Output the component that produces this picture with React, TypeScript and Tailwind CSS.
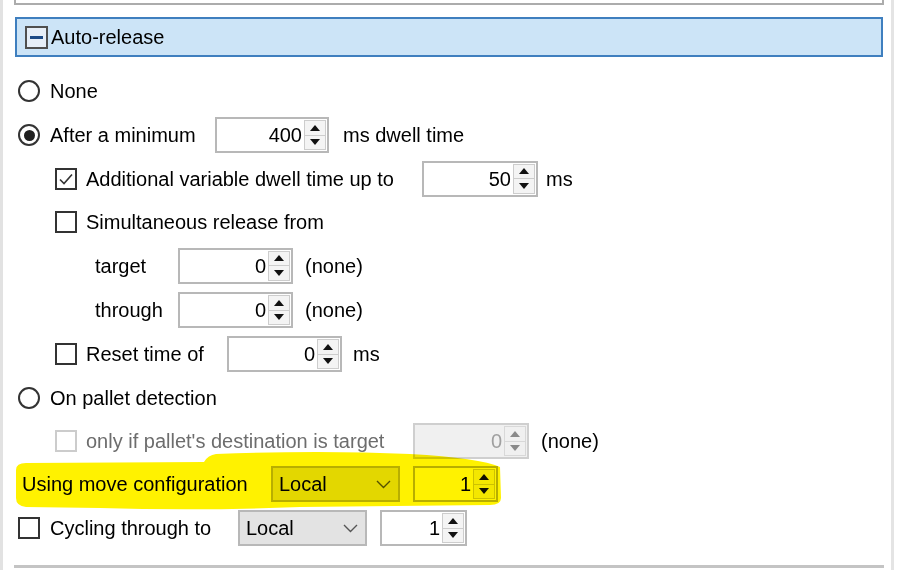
import type { ReactNode } from 'react';

function Radio({ checked = false }: { checked?: boolean }): JSX.Element {
  return (
    <span className="flex h-[22px] w-[22px] shrink-0 items-center justify-center rounded-full border-2 border-[#333333] bg-white">
      {checked && <span className="block h-[11px] w-[11px] rounded-full bg-[#1f1f1f]"></span>}
    </span>
  );
}

function Check({ checked = false, disabled = false }: { checked?: boolean; disabled?: boolean }): JSX.Element {
  return (
    <span
      className={`flex h-[22px] w-[22px] shrink-0 items-center justify-center border-2 bg-white ${
        disabled ? 'border-[#cccccc]' : 'border-[#333333]'
      }`}
    >
      {checked && (
        <svg width="16" height="14" viewBox="0 0 16 14">
          <path d="M2 7.5 L6 11.5 L14 2.5" fill="none" stroke="#333333" strokeWidth="1.6" />
        </svg>
      )}
    </span>
  );
}

function Spin({
  value,
  className,
  disabled = false,
}: {
  value: string;
  className: string;
  disabled?: boolean;
}): JSX.Element {
  const arrow = disabled ? '#8a8a8a' : '#111111';
  return (
    <div
      className={`flex h-[36px] shrink-0 border-2 ${
        disabled ? 'border-[#cfcfcf] bg-[#f0f0f0]' : 'border-[#b8b8b8] bg-white'
      } ${className}`}
    >
      <div
        className={`flex flex-1 items-center justify-end pr-[2px] ${
          disabled ? 'text-[#a0a0a0]' : 'text-black'
        }`}
      >
        {value}
      </div>
      <div className="flex w-[23px] flex-col py-[1px] pr-[1px]">
        <div
          className={`flex flex-1 items-center justify-center border ${
            disabled ? 'border-[#d8d8d8] bg-[#f0f0f0]' : 'border-[#cdcdcd] bg-[#f4f4f4]'
          }`}
        >
          <svg width="10" height="6" viewBox="0 0 10 6">
            <path d="M0 6 L5 0 L10 6 Z" fill={arrow} />
          </svg>
        </div>
        <div
          className={`flex flex-1 items-center justify-center border border-t-0 ${
            disabled ? 'border-[#d8d8d8] bg-[#f0f0f0]' : 'border-[#cdcdcd] bg-[#f4f4f4]'
          }`}
        >
          <svg width="10" height="6" viewBox="0 0 10 6">
            <path d="M0 0 L10 0 L5 6 Z" fill={arrow} />
          </svg>
        </div>
      </div>
    </div>
  );
}

function Combo({ value }: { value: string }): JSX.Element {
  return (
    <div className="flex h-[36px] w-[129px] shrink-0 items-center justify-between border-2 border-[#b8b8b8] bg-[#e3e3e3] pl-[6px] pr-[7px]">
      <span>{value}</span>
      <svg width="15" height="9" viewBox="0 0 15 9">
        <path d="M1 1 L7.5 7.5 L14 1" fill="none" stroke="#555555" strokeWidth="1.4" />
      </svg>
    </div>
  );
}

function Row({ h, pl, children }: { h: string; pl: string; children: ReactNode }): JSX.Element {
  return <div className={`flex items-center ${h} ${pl}`}>{children}</div>;
}

export default function App(): JSX.Element {
  return (
    <div className="relative flex h-[570px] w-[900px] overflow-hidden bg-white font-['Liberation_Sans',Arial,sans-serif] text-[20px] leading-none text-black">
      {/* left frame */}
      <div className="w-[3px] shrink-0 bg-[#e2e2e2]"></div>

      <div className="ml-[11px] flex w-[870px] shrink-0 flex-col">
        {/* panel above */}
        <div className="h-[5px] border-x-2 border-b-2 border-[#acacac]"></div>

        {/* group header */}
        <div className="ml-[1px] mt-[12px] flex h-[40px] w-[868px] items-center border-2 border-[#3f7fbf] bg-[#cce4f7] pl-[8px]">
          <span className="flex h-[23px] w-[23px] items-center justify-center border-2 border-[#4f4f4f] bg-[#e6eef7]">
            <span className="block h-[3px] w-[13px] bg-[#1d4a85]"></span>
          </span>
          <span className="ml-[3px]">Auto-release</span>
        </div>

        <div className="mt-[12px] flex flex-col">
          <Row h="h-[44px]" pl="pl-[4px]">
            <Radio />
            <span className="ml-[10px]">None</span>
          </Row>

          <Row h="h-[44px]" pl="pl-[4px]">
            <Radio checked />
            <span className="ml-[10px] w-[165px]">After a minimum</span>
            <Spin value="400" className="w-[114px]" />
            <span className="ml-[14px]">ms dwell time</span>
          </Row>

          <Row h="h-[43px]" pl="pl-[41px]">
            <Check checked />
            <span className="ml-[9px] w-[336px]">Additional variable dwell time up to</span>
            <Spin value="50" className="w-[116px]" />
            <span className="ml-[8px]">ms</span>
          </Row>

          <Row h="h-[43px]" pl="pl-[41px]">
            <Check />
            <span className="ml-[9px]">Simultaneous release from</span>
          </Row>

          <Row h="h-[45px]" pl="pl-[81px]">
            <span className="w-[83px]">target</span>
            <Spin value="0" className="w-[115px]" />
            <span className="ml-[12px]">(none)</span>
          </Row>

          <Row h="h-[44px]" pl="pl-[81px]">
            <span className="w-[83px]">through</span>
            <Spin value="0" className="w-[115px]" />
            <span className="ml-[12px]">(none)</span>
          </Row>

          <Row h="h-[44px]" pl="pl-[41px]">
            <Check />
            <span className="ml-[9px] w-[141px]">Reset time of</span>
            <Spin value="0" className="w-[115px]" />
            <span className="ml-[11px]">ms</span>
          </Row>

          <Row h="h-[44px]" pl="pl-[4px]">
            <Radio />
            <span className="ml-[10px]">On pallet detection</span>
          </Row>

          <Row h="h-[42px]" pl="pl-[41px]">
            <Check disabled />
            <span className="ml-[9px] w-[327px] text-[#6d6d6d]">only if pallet's destination is target</span>
            <Spin value="0" className="w-[116px]" disabled />
            <span className="ml-[12px]">(none)</span>
          </Row>

          <Row h="h-[44px]" pl="pl-[8px]">
            <span className="w-[249px]">Using move configuration</span>
            <Combo value="Local" />
            <Spin value="1" className="ml-[13px] w-[85px]" />
          </Row>

          <Row h="h-[44px]" pl="pl-[4px]">
            <Check />
            <span className="ml-[10px] w-[188px]">Cycling through to</span>
            <Combo value="Local" />
            <Spin value="1" className="ml-[13px] w-[87px]" />
          </Row>
        </div>

        {/* panel below */}
        <div className="mt-[15px] h-[3px] bg-[#c4c4c4]"></div>
      </div>

      {/* right frame */}
      <div className="ml-[7px] w-[3px] shrink-0 bg-[#e4e4e4]"></div>

      {/* highlighter mark */}
      <svg
        className="pointer-events-none absolute left-0 top-0 mix-blend-multiply"
        width="900"
        height="570"
        viewBox="0 0 900 570"
      >
        <path
          d="M16 470 Q16 463 26 463 L204 462 Q208 455 216 454 Q320 450 410 454 Q480 458 500 467 L501 498 Q501 505 490 505 L300 507 Q200 511 100 508 L26 507 Q16 506 16 498 Z"
          fill="#fff200"
        />
      </svg>
    </div>
  );
}
